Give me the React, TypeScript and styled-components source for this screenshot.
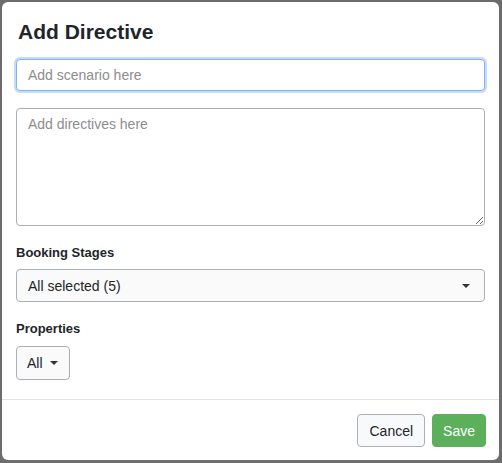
import React from 'react';
import styled, { createGlobalStyle } from 'styled-components';

const GlobalStyle = createGlobalStyle`
  html, body {
    margin: 0;
    padding: 0;
    background: #6c6c6c;
  }
  body {
    font-family: "Liberation Sans", Arial, sans-serif;
    color: #212529;
  }
`;

const Backdrop = styled.div`
  padding: 2px 3px 3px 2px;
  height: 463px;
  box-sizing: border-box;
`;

const Modal = styled.div`
  background: #fff;
  border-radius: 6px;
  height: 100%;
  display: flex;
  flex-direction: column;
`;

const Header = styled.div`
  padding: 18px 16px 0 16px;
`;

const Title = styled.h4`
  margin: 0;
  font-size: 21px;
  font-weight: 700;
  line-height: 24px;
`;

const Body = styled.div`
  padding: 15px 14px 19px 14px;
  display: flex;
  flex-direction: column;
  flex: 1;
`;

const TextInput = styled.input`
  box-sizing: border-box;
  width: 100%;
  height: 32px;
  padding: 0 11px;
  font: inherit;
  font-size: 14px;
  color: #212529;
  border: 1px solid #80b3f0;
  border-radius: 4px;
  box-shadow: 0 0 0 2px #c6dcfb;
  outline: none;
  &::placeholder {
    color: #8d8d8d;
  }
`;

const TextArea = styled.textarea`
  box-sizing: border-box;
  width: 100%;
  height: 118px;
  margin-top: 17px;
  padding: 7px 11px;
  font: inherit;
  font-size: 14px;
  border: 1px solid #aab0b5;
  border-radius: 4px;
  resize: vertical;
  outline: none;
  &::placeholder {
    color: #8d8d8d;
  }
`;

const Label = styled.div`
  margin-top: 18px;
  font-size: 13px;
  font-weight: 700;
  line-height: 18px;
`;

const Caret = styled.span`
  display: inline-block;
  width: 0;
  height: 0;
  border-left: 4px solid transparent;
  border-right: 4px solid transparent;
  border-top: 4px solid #333;
`;

const SelectBox = styled.div`
  box-sizing: border-box;
  margin-top: 7px;
  height: 33px;
  padding: 0 14px 0 11px;
  display: flex;
  align-items: center;
  justify-content: space-between;
  font-size: 14px;
  background: #fafafa;
  border: 1px solid #aab0b5;
  border-radius: 4px;
`;

const DropButton = styled.button`
  box-sizing: border-box;
  margin-top: 8px;
  align-self: flex-start;
  height: 34px;
  padding: 0 11px 0 10px;
  display: flex;
  align-items: center;
  gap: 7px;
  font: inherit;
  font-size: 14px;
  color: #212529;
  background: #fafafa;
  border: 1px solid #aab0b5;
  border-radius: 4px;
`;

const Footer = styled.div`
  border-top: 1px solid #e3e3e3;
  padding: 14px 13px 14px 14px;
  display: flex;
  justify-content: flex-end;
  gap: 7px;
`;

const Button = styled.button<{ $primary?: boolean }>`
  box-sizing: border-box;
  height: 33px;
  padding: 0 ${p => (p.$primary ? '10px' : '11px')};
  font: inherit;
  font-size: 14px;
  border-radius: 4px;
  color: ${p => (p.$primary ? '#fff' : '#212529')};
  background: ${p => (p.$primary ? '#5cb05c' : '#f8f9fa')};
  border: 1px solid ${p => (p.$primary ? '#5cb05c' : '#aab0b5')};
`;

export default function App() {
  return (
    <>
      <GlobalStyle />
      <Backdrop>
        <Modal>
          <Header>
            <Title>Add Directive</Title>
          </Header>
          <Body>
            <TextInput placeholder="Add scenario here" />
            <TextArea placeholder="Add directives here" />
            <Label>Booking Stages</Label>
            <SelectBox>
              <span>All selected (5)</span>
              <Caret />
            </SelectBox>
            <Label>Properties</Label>
            <DropButton>
              All <Caret />
            </DropButton>
          </Body>
          <Footer>
            <Button>Cancel</Button>
            <Button $primary>Save</Button>
          </Footer>
        </Modal>
      </Backdrop>
    </>
  );
}
